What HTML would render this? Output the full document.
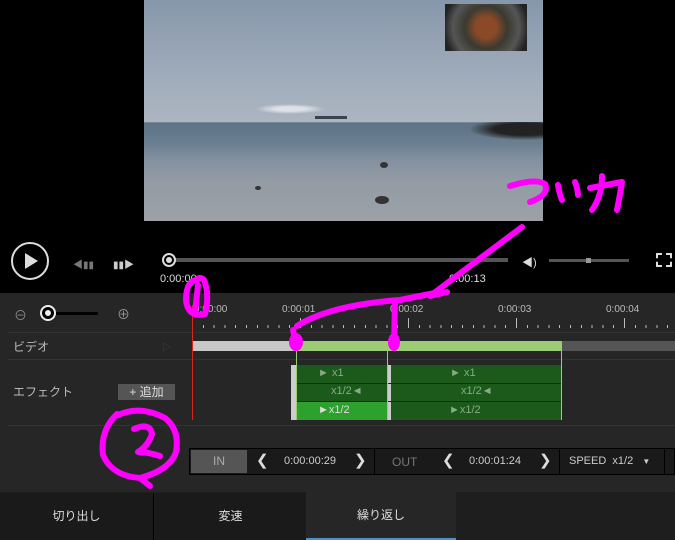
<!DOCTYPE html>
<html><head><meta charset="utf-8"><style>
*{margin:0;padding:0;box-sizing:border-box}
body{width:675px;height:540px;background:#000;position:relative;overflow:hidden;font-family:"Liberation Sans","Noto Sans CJK JP",sans-serif;color:#ccc;font-size:11px}
.a{position:absolute}
</style></head><body>
<!-- video -->
<div class="a" style="left:144px;top:0;width:399px;height:221px;background:linear-gradient(#8797ab 0%,#a3afbd 40%,#acb5c0 55%,#adb5bf 55.2%,#5d7386 55.5%,#6a7f90 65%,#8390a0 72%,#939ba4 82%,#9ca1a7 100%)"></div>
<div class="a" style="left:255px;top:104px;width:70px;height:10px;background:radial-gradient(ellipse,#dde2e8 30%,transparent 70%)"></div>
<div class="a" style="left:315px;top:116px;width:32px;height:3px;background:#3a4350"></div>
<div class="a" style="left:470px;top:122px;width:73px;height:18px;background:radial-gradient(ellipse at 75% 40%,#222 40%,transparent 72%)"></div>
<div class="a" style="left:380px;top:162px;width:8px;height:6px;border-radius:50%;background:#333"></div>
<div class="a" style="left:375px;top:196px;width:14px;height:8px;border-radius:50%;background:#333"></div>
<div class="a" style="left:255px;top:186px;width:6px;height:4px;border-radius:50%;background:#333"></div>
<div class="a" style="left:445px;top:4px;width:82px;height:47px;background:radial-gradient(circle at 50% 50%,#8a4a28 22%,#3a3a30 45%,#555 70%,#222 90%)"></div>
<!-- controls -->
<div class="a" style="left:0;top:221px;width:675px;height:72px;background:#000"></div>
<div class="a" style="left:11px;top:242px;width:38px;height:38px;border:2px solid #ddd;border-radius:50%"></div>
<div class="a" style="left:25px;top:253px;width:0;height:0;border-left:13px solid #ddd;border-top:8px solid transparent;border-bottom:8px solid transparent"></div>
<div class="a" style="left:73px;top:256px;color:#777;font-size:10px">◀▮▮</div>
<div class="a" style="left:113px;top:256px;color:#ccc;font-size:10px">▮▮▶</div>
<div class="a" style="left:168px;top:258px;width:340px;height:4px;background:#555"></div>
<div class="a" style="left:162px;top:253px;width:14px;height:14px;border:2px solid #ddd;border-radius:50%;background:#000"></div>
<div class="a" style="left:166px;top:257px;width:6px;height:6px;border-radius:50%;background:#ddd"></div>
<div class="a" style="left:160px;top:273px;color:#ddd">0:00:00</div>
<div class="a" style="left:449px;top:273px;color:#ddd">0:00:13</div>
<div class="a" style="left:522px;top:254px;color:#ddd;font-size:11px">◀)</div>
<div class="a" style="left:549px;top:259px;width:80px;height:3px;background:#555"></div>
<div class="a" style="left:586px;top:258px;width:5px;height:5px;background:#999"></div>
<div class="a" style="left:656px;top:253px;width:16px;height:14px;border:2px dashed #ddd"></div>
<!-- timeline panel -->
<div class="a" style="left:0;top:293px;width:675px;height:199px;background:#262626"></div>
<div class="a" style="left:14px;top:305px;color:#888;font-size:13px">⊖</div>
<div class="a" style="left:40px;top:305px;width:16px;height:16px;border:2px solid #eee;border-radius:50%;background:#000"></div>
<div class="a" style="left:45px;top:310px;width:6px;height:6px;border-radius:50%;background:#eee"></div>
<div class="a" style="left:56px;top:312px;width:42px;height:3px;background:#000"></div>
<div class="a" style="left:117px;top:304px;color:#999;font-size:13px">⊕</div>
<div class="a" style="left:194px;top:304px;font-size:10px;color:#bbb">0:00:00</div>
<div class="a" style="left:282px;top:304px;font-size:10px;color:#bbb">0:00:01</div>
<div class="a" style="left:390px;top:304px;font-size:10px;color:#bbb">0:00:02</div>
<div class="a" style="left:498px;top:304px;font-size:10px;color:#bbb">0:00:03</div>
<div class="a" style="left:606px;top:304px;font-size:10px;color:#bbb">0:00:04</div>
<div class="a" style="left:192px;top:325px;width:483px;height:3px;background:repeating-linear-gradient(90deg,#bbb 0 1px,transparent 1px 10.8px)"></div>
<div class="a" style="left:192px;top:318px;width:483px;height:10px;background:repeating-linear-gradient(90deg,#bbb 0 1px,transparent 1px 108px)"></div>
<div class="a" style="left:8px;top:332px;width:667px;height:94px;border-top:1px solid #333;border-bottom:1px solid #333"></div>
<div class="a" style="left:8px;top:359px;width:667px;height:1px;background:#333"></div>
<div class="a" style="left:13px;top:338px;color:#bbb;font-size:12px">ビデオ</div>
<div class="a" style="left:162px;top:340px;color:#444;font-size:9px">▷</div>
<div class="a" style="left:193px;top:341px;width:100px;height:10px;background:#c8c8c8"></div>
<div class="a" style="left:293px;top:341px;width:268px;height:10px;background:#9ccc74"></div>
<div class="a" style="left:561px;top:341px;width:114px;height:10px;background:#555"></div>
<div class="a" style="left:13px;top:383px;color:#bbb;font-size:12px">エフェクト</div>
<div class="a" style="left:118px;top:384px;width:57px;height:16px;background:#555;color:#ddd;font-size:12px;line-height:16px;text-align:center">+ 追加</div>
<div class="a" style="left:291px;top:365px;width:5px;height:55px;background:#ccc"></div>
<div class="a" style="left:387px;top:365px;width:4px;height:55px;background:#ccc"></div>
<div class="a" style="left:296px;top:365px;width:91px;height:55px;background:#1c5a1c"></div>
<div class="a" style="left:391px;top:365px;width:170px;height:55px;background:#1c5a1c"></div>
<div class="a" style="left:296px;top:402px;width:91px;height:18px;background:#2ea02e"></div>
<div class="a" style="left:296px;top:383px;width:265px;height:1px;background:#0d300d"></div>
<div class="a" style="left:296px;top:401px;width:265px;height:1px;background:#0d300d"></div>
<div class="a" style="left:296px;top:341px;width:1px;height:79px;background:#9ccc74"></div>
<div class="a" style="left:387px;top:341px;width:1px;height:79px;background:#9ccc74"></div>
<div class="a" style="left:561px;top:341px;width:1px;height:79px;background:#9ccc74"></div>
<div class="a" style="left:318px;top:367px;color:#8a8;font-size:11px">► x1</div>
<div class="a" style="left:450px;top:367px;color:#8a8;font-size:11px">► x1</div>
<div class="a" style="left:331px;top:385px;color:#8a8;font-size:11px">x1/2◄</div>
<div class="a" style="left:461px;top:385px;color:#8a8;font-size:11px">x1/2◄</div>
<div class="a" style="left:318px;top:404px;color:#ddd;font-size:11px">►x1/2</div>
<div class="a" style="left:449px;top:404px;color:#8a8;font-size:11px">►x1/2</div>
<div class="a" style="left:192px;top:305px;width:1px;height:115px;background:#d22"></div>
<!-- bottom bar -->
<div class="a" style="left:189px;top:448px;width:486px;height:27px;background:#1a1a1a;border:1px solid #000"></div>
<div class="a" style="left:191px;top:450px;width:56px;height:23px;background:#555;color:#aaa;font-size:12px;line-height:23px;text-align:center">IN</div>
<div class="a" style="left:256px;top:451px;color:#ddd;font-size:15px">❮</div>
<div class="a" style="left:284px;top:455px;color:#ccc;font-size:11px">0:00:00:29</div>
<div class="a" style="left:354px;top:451px;color:#ddd;font-size:15px">❯</div>
<div class="a" style="left:374px;top:449px;width:1px;height:25px;background:#000"></div>
<div class="a" style="left:392px;top:455px;color:#777;font-size:12px">OUT</div>
<div class="a" style="left:442px;top:451px;color:#ddd;font-size:15px">❮</div>
<div class="a" style="left:469px;top:455px;color:#ccc;font-size:11px">0:00:01:24</div>
<div class="a" style="left:539px;top:451px;color:#ddd;font-size:15px">❯</div>
<div class="a" style="left:559px;top:449px;width:1px;height:25px;background:#000"></div>
<div class="a" style="left:569px;top:455px;color:#ccc;font-size:11px">SPEED&nbsp; x1/2 &nbsp;&nbsp;<span style="font-size:8px">▼</span></div>
<div class="a" style="left:664px;top:449px;width:1px;height:25px;background:#000"></div>
<!-- tabs -->
<div class="a" style="left:0;top:492px;width:675px;height:48px;background:#1e1e1e"></div>
<div class="a" style="left:0;top:493px;width:154px;height:47px;background:#1a1a1a;color:#ddd;font-size:12px;line-height:47px;text-align:center;border-right:1px solid #000">切り出し</div>
<div class="a" style="left:155px;top:493px;width:151px;height:47px;background:#1a1a1a;color:#ddd;font-size:12px;line-height:47px;text-align:center">変速</div>
<div class="a" style="left:306px;top:492px;width:150px;height:48px;background:#262626;color:#ddd;font-size:12px;line-height:46px;text-align:center;border-bottom:2px solid #4a90d0">繰り返し</div>
<!-- annotations -->
<svg class="a" style="left:0;top:0" width="675" height="540">
<g fill="none" stroke="#ff00ff" stroke-width="6" stroke-linecap="round" stroke-linejoin="round">
<path d="M510 186 Q535 178 545 184 Q550 195 530 202"/>
<path d="M558 185 Q560 196 562 200"/>
<path d="M575 182 Q578 190 578 195"/>
<path d="M590 188 L622 182 Q620 195 617 210"/>
<path d="M602 176 Q602 196 592 210"/>
<path d="M522 227 L430 296 L447 292"/>
<path d="M297 326 Q330 305 400 300 L435 293"/>
<path d="M395 302 L394 345"/>
<path d="M293 330 L296 345"/>
<path d="M196 280 Q186 282 186 300 Q188 318 205 314 Q210 295 204 280 Q200 276 196 280"/>
<path d="M198 285 L195 313"/>
<path d="M117 414 Q100 430 103 455 Q112 476 140 478 Q170 470 176 452 Q180 430 165 418 Q140 405 118 415"/>
<path d="M134 429 Q150 422 152 434 Q148 446 138 452 Q148 452 160 456"/>
<path d="M140 478 L150 486"/>
</g>
<g fill="#ff00ff"><ellipse cx="296" cy="342" rx="7" ry="9"/><ellipse cx="394" cy="342" rx="6" ry="9"/></g>
</svg>
</body></html>
